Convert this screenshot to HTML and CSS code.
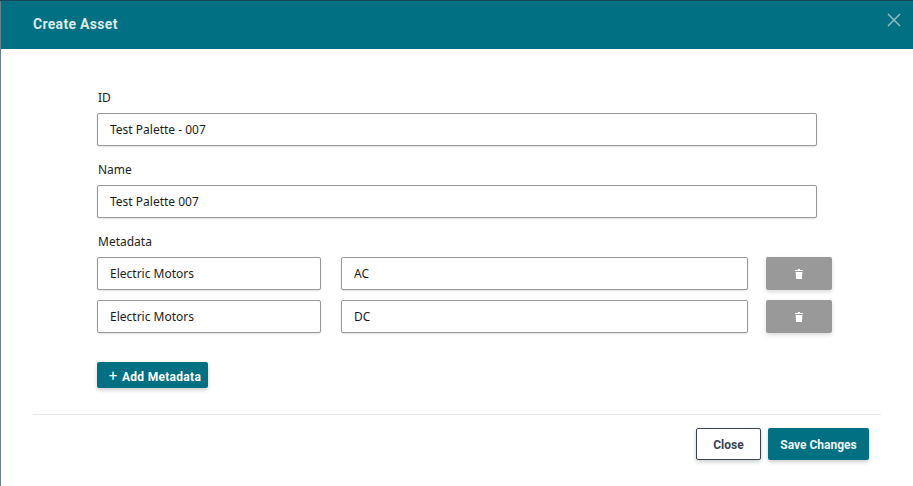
FILE: index.html
```html
<!DOCTYPE html>
<html lang="en">
<head>
<meta charset="UTF-8">
<title>Create Asset</title>
<link rel="stylesheet" href="styles.css">
</head>
<body>
<div class="modal">
    <div class="modal-header">
        <h3>Create Asset</h3>
        <button class="close-x" type="button" aria-label="Close">
            <svg width="14" height="14" viewBox="0 0 14 14"><path d="M1 1L13 13M13 1L1 13" stroke="#8fbcc4" stroke-width="1.5" fill="none"/></svg>
        </button>
    </div>
    <div class="modal-body">
        <div class="field">
            <label>ID</label>
            <input class="input" type="text" value="Test Palette - 007">
        </div>
        <div class="field">
            <label>Name</label>
            <input class="input" type="text" value="Test Palette 007">
        </div>
        <div class="meta">
            <label>Metadata</label>
            <div class="meta-row">
                <input class="input key" type="text" value="Electric Motors">
                <input class="input val" type="text" value="AC">
                <button class="btn-del" type="button" aria-label="Delete">
                    <svg width="8" height="10" viewBox="0 0 8 10"><path d="M3 0H5L5.4 1H8V2H0V1H2.6ZM0.6 3H7.4L6.9 10H1.1Z" fill="#fff"/></svg>
                </button>
            </div>
            <div class="meta-row">
                <input class="input key" type="text" value="Electric Motors">
                <input class="input val" type="text" value="DC">
                <button class="btn-del" type="button" aria-label="Delete">
                    <svg width="8" height="10" viewBox="0 0 8 10"><path d="M3 0H5L5.4 1H8V2H0V1H2.6ZM0.6 3H7.4L6.9 10H1.1Z" fill="#fff"/></svg>
                </button>
            </div>
        </div>
        <button class="btn btn-add" type="button"><span class="plus">+</span> Add Metadata</button>
    </div>
    <div class="modal-footer">
        <button class="btn btn-close" type="button">Close</button>
        <button class="btn btn-save" type="button">Save Changes</button>
    </div>
</div>
</body>
</html>
```

FILE: styles.css
```css
*{margin:0;padding:0;box-sizing:border-box;}
html,body{height:100%;}
body{
	background:#6b818a;
	border-top:1px solid #17485a;
	padding-left:1px;
	overflow:hidden;
	font-family:"Noto Sans","Open Sans",sans-serif;
}
.modal{
	background:#fff;
	height:485px;
	width:912px;
}
.modal-header{
	height:48px;
	background:#007082;
	display:flex;
	align-items:center;
	justify-content:space-between;
	padding:0 12px 2px 32px;
}
.modal-header h3{
	font-family:"Roboto",sans-serif;
	font-size:14px;
	font-weight:700;
	letter-spacing:.3px;
	color:#dbe9eb;
}
.close-x{
	background:none;
	border:0;
	display:flex;
	margin-top:-8px;
}
.modal-body{
	padding:40px 0 0 96px;
}
label{
	display:block;
	padding-left:1px;
	font-size:12px;
	line-height:17px;
	color:#222;
	margin-bottom:7px;
}
.field{margin-bottom:15px;width:720px;}
.input{
	display:block;
	height:33px;
	width:100%;
	border:1px solid #999;
	border-radius:2px;
	padding:0 12px;
	font-family:inherit;
	font-size:12px;
	color:#1b1b1b;
	background:#fff;
	box-shadow:0 1px 2px rgba(0,0,0,.12);
}
.meta-row{
	display:flex;
	margin-bottom:10px;
}
.input.key{width:224px;margin-right:20px;}
.input.val{width:407px;margin-right:18px;}
.btn-del{
	width:66px;
	height:33px;
	background:#999;
	border:0;
	border-radius:2px;
	box-shadow:0 2px 4px rgba(0,0,0,.15);
	display:flex;
	align-items:center;
	justify-content:center;
}
.btn{
	font-family:"Roboto",sans-serif;
	font-weight:700;
	font-size:12px;
	border-radius:2px;
	box-shadow:0 2px 4px rgba(0,0,0,.2);
	padding-top:2px;
}
.btn-add{
	margin-top:19px;
	width:111px;
	height:26px;
	background:#007082;
	color:#fff;
	border:0;
	letter-spacing:.3px;
	padding-left:5px;
}
.plus{font-weight:400;font-size:15px;margin-right:1px;}
.modal-footer{
	margin:26px 32px 0;
	padding:13px 12px 0 0;
	border-top:1px solid #e8e8e8;
	display:flex;
	justify-content:flex-end;
	gap:7px;
}
.btn-close{
	width:65px;
	height:32px;
	background:#fff;
	color:#3a4350;
	border:1px solid #3a4350;
}
.btn-save{
	width:101px;
	height:32px;
	background:#007082;
	color:#eef6f7;
	border:0;
}
```
